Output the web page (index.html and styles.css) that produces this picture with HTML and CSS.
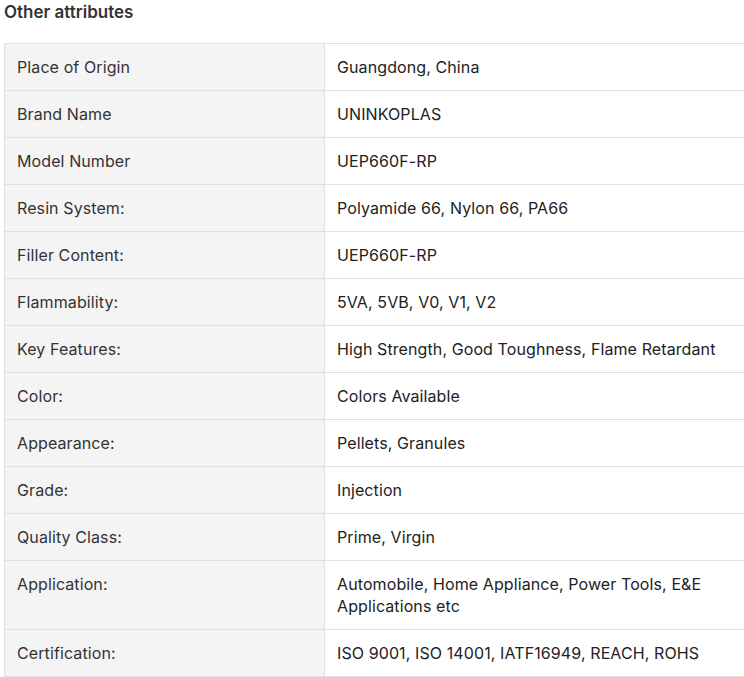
FILE: index.html
```html
<!DOCTYPE html>
<html>
<head>
<meta charset="utf-8">
<link rel="stylesheet" href="styles.css">
</head>
<body>
<div class="attrs">
  <h3 class="attrs-title">Other attributes</h3>
  <table class="attrs-table">
    <tbody>
      <tr><td class="k">Place of Origin</td><td class="v">Guangdong, China</td></tr>
      <tr><td class="k">Brand Name</td><td class="v">UNINKOPLAS</td></tr>
      <tr><td class="k">Model Number</td><td class="v">UEP660F-RP</td></tr>
      <tr><td class="k">Resin System:</td><td class="v">Polyamide 66, Nylon 66, PA66</td></tr>
      <tr><td class="k">Filler Content:</td><td class="v">UEP660F-RP</td></tr>
      <tr><td class="k">Flammability:</td><td class="v">5VA, 5VB, V0, V1, V2</td></tr>
      <tr><td class="k">Key Features:</td><td class="v">High Strength, Good Toughness, Flame Retardant</td></tr>
      <tr><td class="k">Color:</td><td class="v">Colors Available</td></tr>
      <tr><td class="k">Appearance:</td><td class="v">Pellets, Granules</td></tr>
      <tr><td class="k">Grade:</td><td class="v">Injection</td></tr>
      <tr><td class="k">Quality Class:</td><td class="v">Prime, Virgin</td></tr>
      <tr><td class="k">Application:</td><td class="v">Automobile, Home Appliance, Power Tools, E&amp;E Applications etc</td></tr>
      <tr><td class="k">Certification:</td><td class="v">ISO 9001, ISO 14001, IATF16949, REACH, ROHS</td></tr>
    </tbody>
  </table>
</div>
</body>
</html>
```
FILE: styles.css
```css
html, body {
  margin: 0;
  padding: 0;
  background: #fff;
  overflow: hidden;
}
body {
  font-family: Inter, "Noto Sans", sans-serif;
  color: #333;
}
.attrs {
  padding-left: 4px;
  width: 745px;
}
.attrs-title {
  margin: 0;
  font-size: 17px;
  font-weight: 600;
  line-height: 24px;
  color: #333;
  padding: 0 0 19px 0;
}
.attrs-table {
  border-collapse: collapse;
  width: 745px;
  font-size: 16px;
  line-height: 22px;
  letter-spacing: 0.1px;
}
.attrs-table td {
  border: 1px solid #e0e0e0;
  padding: 12px 12px;
  vertical-align: top;
}
.attrs-table .k {
  width: 295px;
  background: #f4f4f4;
  color: #333;
}
.attrs-table .v {
  color: #222;
}
```
